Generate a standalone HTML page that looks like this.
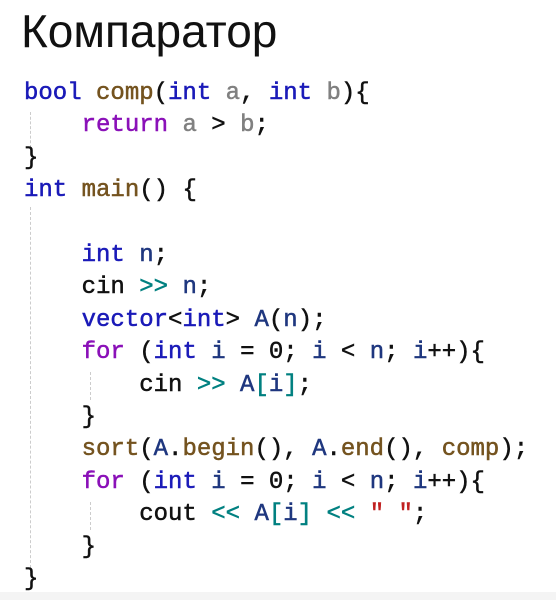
<!DOCTYPE html><html><head><meta charset="utf-8"><style>
body{margin:0;width:556px;height:600px;background:#fff;overflow:hidden;position:relative}
.t{position:absolute;left:21px;top:4px;font:46px "Liberation Sans",sans-serif;color:#111}
pre{position:absolute;left:24px;top:78px;margin:0;font:24px/32.4px "Liberation Mono",monospace;color:#111;-webkit-text-stroke:0.5px;z-index:2}
.k{color:#1a1ab8}.p{color:#8a10b8}.f{color:#74531f}.g{color:#808080}.v{color:#1f377f}.o{color:#008080}.s{color:#c02020}
.bot{position:absolute;left:0;right:0;bottom:0;height:8px;background:#f4f4f4}
.gl{position:absolute;width:0;border-left:1px dashed #ccc}
</style></head><body>
<div class="t">Компаратор</div>
<div class="gl" style="left:30px;top:112px;height:36px"></div>
<div class="gl" style="left:30px;top:207px;height:366px"></div>
<div class="gl" style="left:90px;top:372px;height:28px"></div>
<div class="gl" style="left:90px;top:502px;height:28px"></div>
<div class="bot"></div>
<pre><span class="k">bool</span> <span class="f">comp</span>(<span class="k">int</span> <span class="g">a</span>, <span class="k">int</span> <span class="g">b</span>){
    <span class="p">return</span> <span class="g">a</span> &gt; <span class="g">b</span>;
}
<span class="k">int</span> <span class="f">main</span>() {

    <span class="k">int</span> <span class="v">n</span>;
    cin <span class="o">&gt;&gt;</span> <span class="v">n</span>;
    <span class="k">vector</span>&lt;<span class="k">int</span>&gt; <span class="v">A</span>(<span class="v">n</span>);
    <span class="p">for</span> (<span class="k">int</span> <span class="v">i</span> = 0; <span class="v">i</span> &lt; <span class="v">n</span>; <span class="v">i</span>++){
        cin <span class="o">&gt;&gt;</span> <span class="v">A</span><span class="o">[</span><span class="v">i</span><span class="o">]</span>;
    }
    <span class="f">sort</span>(<span class="v">A</span>.<span class="f">begin</span>(), <span class="v">A</span>.<span class="f">end</span>(), <span class="f">comp</span>);
    <span class="p">for</span> (<span class="k">int</span> <span class="v">i</span> = 0; <span class="v">i</span> &lt; <span class="v">n</span>; <span class="v">i</span>++){
        cout <span class="o">&lt;&lt;</span> <span class="v">A</span><span class="o">[</span><span class="v">i</span><span class="o">]</span> <span class="o">&lt;&lt;</span> <span class="s">" "</span>;
    }
}</pre>
</body></html>
